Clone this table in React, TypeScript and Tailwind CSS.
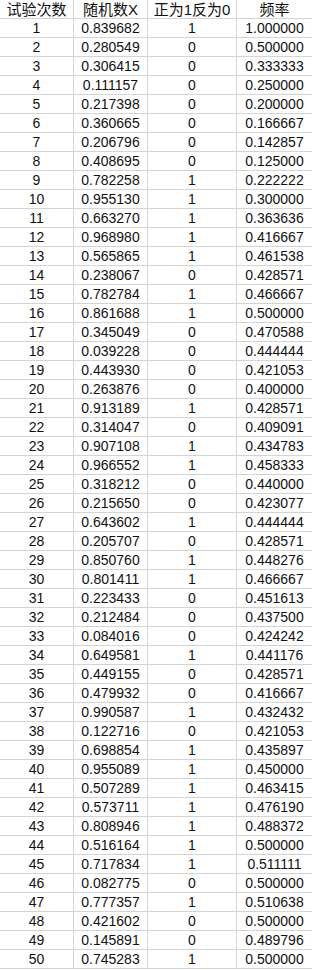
import React from "react";

const rows: [number, string, number, string][] = [
  [1, "0.839682", 1, "1.000000"],
  [2, "0.280549", 0, "0.500000"],
  [3, "0.306415", 0, "0.333333"],
  [4, "0.111157", 0, "0.250000"],
  [5, "0.217398", 0, "0.200000"],
  [6, "0.360665", 0, "0.166667"],
  [7, "0.206796", 0, "0.142857"],
  [8, "0.408695", 0, "0.125000"],
  [9, "0.782258", 1, "0.222222"],
  [10, "0.955130", 1, "0.300000"],
  [11, "0.663270", 1, "0.363636"],
  [12, "0.968980", 1, "0.416667"],
  [13, "0.565865", 1, "0.461538"],
  [14, "0.238067", 0, "0.428571"],
  [15, "0.782784", 1, "0.466667"],
  [16, "0.861688", 1, "0.500000"],
  [17, "0.345049", 0, "0.470588"],
  [18, "0.039228", 0, "0.444444"],
  [19, "0.443930", 0, "0.421053"],
  [20, "0.263876", 0, "0.400000"],
  [21, "0.913189", 1, "0.428571"],
  [22, "0.314047", 0, "0.409091"],
  [23, "0.907108", 1, "0.434783"],
  [24, "0.966552", 1, "0.458333"],
  [25, "0.318212", 0, "0.440000"],
  [26, "0.215650", 0, "0.423077"],
  [27, "0.643602", 1, "0.444444"],
  [28, "0.205707", 0, "0.428571"],
  [29, "0.850760", 1, "0.448276"],
  [30, "0.801411", 1, "0.466667"],
  [31, "0.223433", 0, "0.451613"],
  [32, "0.212484", 0, "0.437500"],
  [33, "0.084016", 0, "0.424242"],
  [34, "0.649581", 1, "0.441176"],
  [35, "0.449155", 0, "0.428571"],
  [36, "0.479932", 0, "0.416667"],
  [37, "0.990587", 1, "0.432432"],
  [38, "0.122716", 0, "0.421053"],
  [39, "0.698854", 1, "0.435897"],
  [40, "0.955089", 1, "0.450000"],
  [41, "0.507289", 1, "0.463415"],
  [42, "0.573711", 1, "0.476190"],
  [43, "0.808946", 1, "0.488372"],
  [44, "0.516164", 1, "0.500000"],
  [45, "0.717834", 1, "0.511111"],
  [46, "0.082775", 0, "0.500000"],
  [47, "0.777357", 1, "0.510638"],
  [48, "0.421602", 0, "0.500000"],
  [49, "0.145891", 0, "0.489796"],
  [50, "0.745283", 1, "0.500000"],
];

const cell =
  "h-[19px] flex items-center justify-center border-b border-[#d4d4d4] leading-none";
const mid = cell + " border-r";

const App = () => {
  return (
    <div className="w-[312px] h-[970px] bg-white overflow-hidden text-[#111] font-['Liberation_Sans','Noto_Sans_CJK_SC',sans-serif] text-[14px]">
      <div className="grid grid-cols-[74px_74px_89px_75px]">
        {/* header */}
        <div className={mid + " text-[15px]"}>试验次数</div>
        <div className={mid + " text-[15px]"}>随机数X</div>
        <div className={mid + " text-[15px]"}>正为1反为0</div>
        <div className={cell + " text-[15px]"}>频率</div>

        {rows.map(([n, x, v, f]) => (
          <React.Fragment key={n}>
            <div className={mid}>{n}</div>
            <div className={mid}>{x}</div>
            <div className={mid}>{v}</div>
            <div className={cell}>{f}</div>
          </React.Fragment>
        ))}
      </div>
    </div>
  );
};

export default App;
